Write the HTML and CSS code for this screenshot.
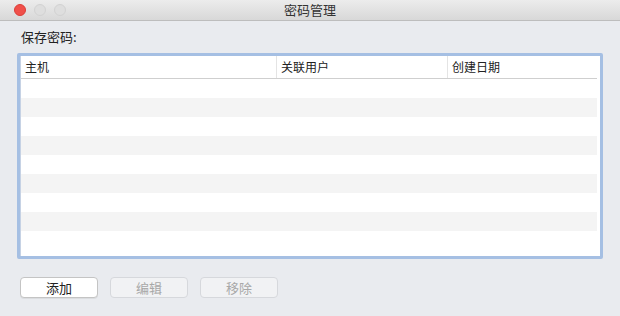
FILE: index.html
```html
<!DOCTYPE html>
<html>
<head>
<meta charset="utf-8">
<link rel="stylesheet" href="styles.css">
</head>
<body>
<div class="window">
  <div class="titlebar">
    <div class="lights">
      <span class="light red"></span>
      <span class="light gray"></span>
      <span class="light gray"></span>
    </div>
    <div class="title">密码管理</div>
  </div>
  <div class="content">
    <div class="label">保存密码:</div>
    <div class="frame">
      <div class="table">
        <div class="thead">
          <div class="th c1">主机</div>
          <div class="th c2">关联用户</div>
          <div class="th c3">创建日期</div>
        </div>
        <div class="rows">
          <div class="row"></div>
          <div class="row alt"></div>
          <div class="row"></div>
          <div class="row alt"></div>
          <div class="row"></div>
          <div class="row alt"></div>
          <div class="row"></div>
          <div class="row alt"></div>
          <div class="row"></div>
        </div>
      </div>
    </div>
    <div class="buttons">
      <button class="btn">添加</button>
      <button class="btn disabled">编辑</button>
      <button class="btn disabled">移除</button>
    </div>
  </div>
</div>
</body>
</html>
```

FILE: styles.css
```css
* { box-sizing: border-box; }
html, body { margin: 0; padding: 0; }
body {
  width: 620px;
  height: 316px;
  overflow: hidden;
  background: #e9ebef;
  font-family: "Noto Sans CJK SC", "Noto Sans", sans-serif;
  color: #222;
}
.window { width: 620px; height: 316px; display: flex; flex-direction: column; }
.titlebar {
  height: 21px;
  flex: none;
  background: linear-gradient(#ececec, #d8d8d8);
  border-bottom: 1px solid #bdbdbd;
  display: flex;
  align-items: center;
  position: relative;
}
.lights { display: flex; gap: 8px; padding-left: 14px; }
.light { width: 12px; height: 12px; border-radius: 50%; display: block; }
.red { background: #f0504a; border: 1px solid #dc3d37; }
.gray { background: #dedede; border: 1px solid #d2d2d2; }
.title {
  position: absolute;
  left: 0; right: 0; top: 0;
  text-align: center;
  font-size: 13px;
  line-height: 20px;
  color: #333;
}
.content { padding: 7px 17px 0 17px; }
.label { font-size: 13px; line-height: 17px; padding-left: 4px; color: #222; }
.frame {
  margin-top: 8px;
  width: 586px;
  height: 206px;
  border: 3px solid #a5bfe3;
  border-radius: 2px;
  background: #fff;
  padding: 0 3px 0 0;
}
.table { border-left: 1px solid #c6d2e4; height: 100%; overflow: hidden; }
.thead {
  display: flex;
  height: 23px;
  border-bottom: 1px solid #cfcfcf;
  background: #fff;
  font-size: 12px;
  line-height: 21px;
}
.th { padding-left: 4px; color: #222; }
.c1 { width: 256px; border-right: 1px solid #e4e4e4; }
.c2 { width: 171px; border-right: 1px solid #e4e4e4; }
.c3 { flex: 1; }
.row { height: 19px; background: #fff; }
.row.alt { background: #f4f4f4; }
.buttons { display: flex; gap: 12px; margin-top: 18px; padding-left: 3px; }
.btn {
  width: 78px;
  height: 21px;
  padding: 0;
  border: 1px solid #c4c4c4;
  border-radius: 4px;
  background: #fff;
  font-family: "Noto Sans CJK SC", sans-serif;
  font-size: 13px;
  line-height: 19px;
  color: #222;
  box-shadow: 0 1px 0 rgba(0,0,0,0.06);
}
.btn.disabled { background: #f1f2f4; color: #a8a8a8; border-color: #d6d8dc; box-shadow: none; }
```
